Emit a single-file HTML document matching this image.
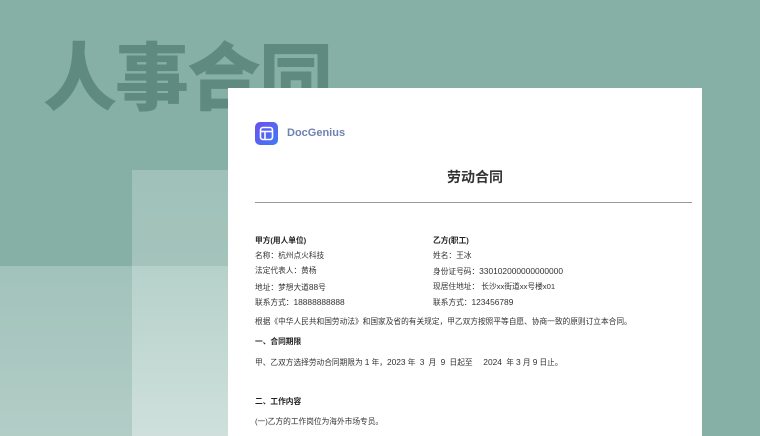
<!DOCTYPE html>
<html><head><meta charset="utf-8"><style>
*{margin:0;padding:0;box-sizing:border-box}
body{width:760px;height:436px;overflow:hidden;position:relative;background:#86b0a5;font-family:"Liberation Sans","Noto Sans CJK SC",sans-serif}
.big{position:absolute;left:43px;top:28px;font-size:74px;font-weight:900;color:#5f8a7f;letter-spacing:-2px;line-height:90px;font-family:"Noto Sans CJK SC",sans-serif}
.band{position:absolute;left:0;top:266px;width:228px;height:170px;background:linear-gradient(#a1c2ba,#b2cdc6)}
.rect{position:absolute;left:132px;top:170px;width:100px;height:266px;background:linear-gradient(#a0c1b9 0,#a3c3bb 96px,#b6d1ca 96px,#cfe0dc 100%)}
.paper{position:absolute;left:228px;top:88px;width:474px;height:348px;background:#fff}
.t{position:absolute;font-size:7.7px;color:#333;white-space:nowrap;line-height:10px}
.t span{font-size:8.4px}
.b{font-weight:bold;color:#222}
</style></head><body>
<div class="big">人事合同</div>
<div class="band"></div>
<div class="rect"></div>
<div class="paper">
<div style="position:absolute;left:27px;top:34px;width:23px;height:23px;border-radius:5px;background:linear-gradient(135deg,#6a4ff0,#3f7bf5)">
<svg width="23" height="23" viewBox="0 0 23 23"><rect x="5.5" y="5.5" width="12" height="12" rx="2.5" fill="none" stroke="#fff" stroke-width="1.6"/><line x1="5.5" y1="9.5" x2="17.5" y2="9.5" stroke="#fff" stroke-width="1.6"/><line x1="10" y1="9.5" x2="10" y2="17.5" stroke="#fff" stroke-width="1.6"/></svg></div>
<div style="position:absolute;left:59px;top:39px;font-size:11px;font-weight:bold;color:#6f82b0">DocGenius</div>
<div style="position:absolute;left:219px;top:79px;font-size:14px;font-weight:bold;color:#333">劳动合同</div>
<div style="position:absolute;left:27px;top:114px;width:437px;height:1px;background:#999"></div>
</div>
<div class="t b" style="left:255px;top:236px">甲方(用人单位)</div>
<div class="t" style="left:255px;top:251px">名称：杭州点火科技</div>
<div class="t" style="left:255px;top:266px">法定代表人：黄杨</div>
<div class="t" style="left:255px;top:282px">地址：梦想大道<span>88</span>号</div>
<div class="t" style="left:255px;top:297px">联系方式：<span>18888888888</span></div>
<div class="t b" style="left:433px;top:236px">乙方(职工)</div>
<div class="t" style="left:433px;top:251px">姓名：王冰</div>
<div class="t" style="left:433px;top:266px">身份证号码：<span>330102000000000000</span></div>
<div class="t" style="left:433px;top:282px">现居住地址：&nbsp;长沙xx街道xx号楼x01</div>
<div class="t" style="left:433px;top:297px">联系方式：<span>123456789</span></div>
<div class="t" style="left:255px;top:317px">根据《中华人民共和国劳动法》和国家及省的有关规定，甲乙双方按照平等自愿、协商一致的原则订立本合同。</div>
<div class="t b" style="left:255px;top:337px">一、合同期限</div>
<div class="t" style="left:255px;top:357px">甲、乙双方选择劳动合同期限为 <span>1</span> 年，<span>2023</span> 年&nbsp; <span>3</span>&nbsp; 月&nbsp; <span>9</span>&nbsp; 日起至&nbsp;&nbsp;&nbsp;&nbsp; <span>2024</span>&nbsp; 年 <span>3</span> 月 <span>9</span> 日止。</div>
<div class="t b" style="left:255px;top:397px">二、工作内容</div>
<div class="t" style="left:255px;top:417px">(一)乙方的工作岗位为海外市场专员。</div>
</body></html>
